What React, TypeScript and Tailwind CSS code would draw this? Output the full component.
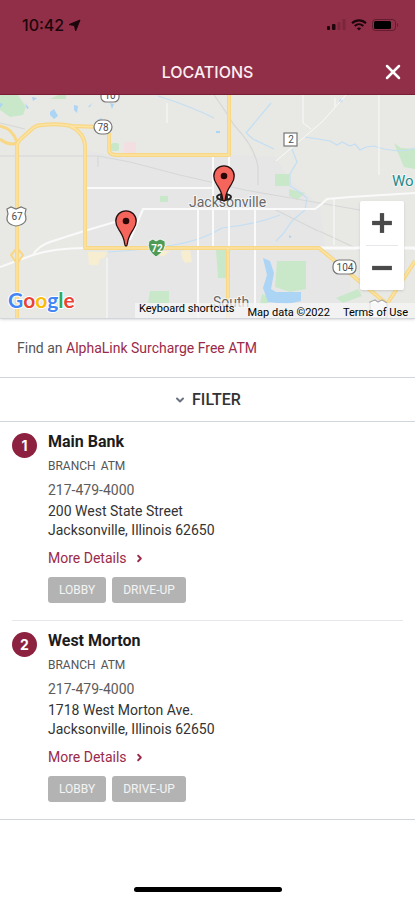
import React from 'react'
import { ChevronDown, ChevronRight, Minus, Plus, X } from 'lucide-react'

type Location = {
  id: number
  name: string
  types: string[]
  phone: string
  street: string
  city: string
  services: string[]
}

const locations: Location[] = [
  {
    id: 1,
    name: 'Main Bank',
    types: ['BRANCH', 'ATM'],
    phone: '217-479-4000',
    street: '200 West State Street',
    city: 'Jacksonville, Illinois 62650',
    services: ['LOBBY', 'DRIVE-UP'],
  },
  {
    id: 2,
    name: 'West Morton',
    types: ['BRANCH', 'ATM'],
    phone: '217-479-4000',
    street: '1718 West Morton Ave.',
    city: 'Jacksonville, Illinois 62650',
    services: ['LOBBY', 'DRIVE-UP'],
  },
]

const StatusBar: React.FC = () => (
  <div className="flex h-[50px] items-center justify-between pl-[22px] pr-4 text-[#1c060c]">
    <div className="flex items-center gap-1 font-['Inter'] text-base font-medium">
      <span>10:42</span>
      <svg width="13" height="13" viewBox="0 0 13 13" fill="currentColor" stroke="currentColor" strokeLinejoin="round">
        <path d="M12 1 L7.6 12 L6.5 6.6 L1 5.6 Z" />
      </svg>
    </div>
    <div className="flex items-center gap-[5px]">
      <svg width="19" height="12" viewBox="0 0 19 12" fill="currentColor">
        <rect x="0" y="7" width="3" height="4" rx="1" />
        <rect x="5" y="5" width="3.5" height="6" rx="1" />
        <rect x="10.500" y="3" width="3" height="8" rx="1" opacity="0.2" />
        <rect x="15.500" y="0" width="3" height="11" rx="1" opacity="0.2" />
      </svg>
      <svg width="16" height="12" viewBox="0 0 16 12" fill="none" stroke="currentColor">
        <path d="M1 4.200 C5 0.300 11 0.300 15 4.200" strokeWidth="2.200" />
        <path d="M3.700 7 C6.200 4.700 9.800 4.700 12.300 7" strokeWidth="2" />
        <path d="M8 11.500 L5.800 9.300 C7 8.300 9 8.300 10.200 9.300 Z" fill="currentColor" stroke="none" />
      </svg>
      <svg width="27" height="12" viewBox="0 0 27 12" fill="none">
        <rect x="0.500" y="0.500" width="23" height="11" rx="3" stroke="currentColor" opacity="0.4" />
        <rect x="2" y="2" width="17" height="8" rx="1.500" fill="#000" />
        <path d="M25 4 C26.500 4.500 26.500 7.500 25 8 Z" fill="currentColor" opacity="0.4" />
      </svg>
    </div>
  </div>
)

const Header: React.FC = () => (
  <header className="border-b border-[#7c1f38] bg-[#922f48]">
    <StatusBar />
    <div className="grid h-11 grid-cols-[44px_1fr_44px] items-center">
      <h1 className="col-start-2 text-center font-['Inter'] text-base font-medium text-[#fbeef1]">LOCATIONS</h1>
      <button className="flex h-11 items-center justify-center text-white" aria-label="Close">
        <X size={24} strokeWidth={2.5} />
      </button>
    </div>
  </header>
)

const Pin: React.FC<{ x: number; y: number }> = ({ x, y }) => (
  <g transform={`translate(${x} ${y})`}>
    <path
      d="M0 0 C-0.800 0 -1.200 -0.800 -1.400 -2.500 C-2 -9 -4.500 -12 -7.500 -17 C-9.500 -20 -10.200 -22.500 -10.200 -25 A10.200 10.200 0 0 1 10.200 -25 C10.200 -22.500 9.500 -20 7.500 -17 C4.500 -12 2 -9 1.400 -2.500 C1.200 -0.800 0.800 0 0 0 Z"
      fill="#f6655b"
      stroke="#26100f"
      strokeWidth="1.300"
    />
    <circle cx="0" cy="-25" r="3.300" fill="#2a0808" />
  </g>
)

const MapCanvas: React.FC = () => (
  <svg
    className="block h-[223px] w-full"
    viewBox="0 0 415 223"
    preserveAspectRatio="xMidYMid slice"
    fontFamily="Roboto, sans-serif"
    role="img"
    aria-label="Map of Jacksonville"
  >
    <rect width="415" height="223" fill="#e8e8e4" />
    {/* TOWN AREA */}
    <path d="M85 55 L109 60 L229 60 L275 62 L290 85 L320 110 L325 150 L350 180 L350 223 L108 223 L108 154 L85 153 Z" fill="#e6e6e7" />
    {/* PARKS */}
    <g fill="#c9e8ca">
      <path d="M0 0 H18 L26 12 L23 20 L10 22 L0 15 Z" />
      <path d="M50 4 L58 0 H66 V4 Z" />
      <rect x="111" y="48" width="8" height="8" rx="2" />
      <rect x="160" y="101" width="8" height="6" />
      <path d="M275 79 H289 V91 H275 Z M289 94 L305 98 L297 105 L289 101 Z" />
      <path d="M394 48 L401 53 L415 54 V74 L404 72 Z" />
      <path d="M216 155 H226 V183 H218 Z" />
      <path d="M150 196 H169 V208 H148 Z" />
      <path d="M277 166 H306 V194 L290 197 L275 192 Z" />
      <path d="M336 203 L358 194 L362 201 L343 208 Z" />
      <path d="M262 199 L270 203 L268 209 H260 Z" />
    </g>
    <rect x="124" y="47" width="12" height="12" rx="3" fill="#f3dfe2" />
    <g fill="#f7edd0">
      <path d="M88 157 H108 L104 163 L100 164 L98 170 H89 Z" />
      <path d="M160 156 H170 L164 161 H160 Z M181 156 L190 155 L192 167 L185 168 L182 163 Z" />
    </g>
    {/* WATER */}
    <g fill="none" stroke="#c3dff3" strokeWidth="1.200">
      <path d="M158 1 Q190 11 214 23" />
      <path d="M271 8 L246 38 L253 44 L274 54" />
      <path d="M305 42 L318 44 L330 46 L337 50 L342 47 L350 51 L355 49 L360 55 L366 52 L374 51 L384 54 L398 56 L408 55 L415 53" />
      <path d="M292 54 L297 67 L290 79 L290 91 L298 96 L307 103 L305 115 L292 126 L283 139 L276 146" />
      <path d="M108 157 Q145 155 174 150 T222 133 Q254 130 280 120" />
    </g>
    <g fill="#acd4f4">
      <path d="M50 17 L54 14 L58 21 L54 24 L50 20 Z M74 10 L78 11 L77 18 L74 15 Z M25 8 L29 13 L27 14 Z M32 2 L37 3 L33 6 Z M88 12 L92 8 L90 12 Z M110 8 L114 9 L112 14 Z M0 8 L3 9 L0 13 Z" />
      <path d="M97 25 L102 23 L101 27 Z M216 36 H220 V38 H216 Z M340 4 L343 6 L339 8 Z M289 140 L292 142 L289 143 Z" />
      <path d="M263 163 L270 166 L274 178 L271 194 L276 197 H301 V206 L287 209 L268 207 L263 193 L267 180 Z" />
    </g>
    {/* RAILWAYS */}
    <g fill="none" stroke="#d6d8d8" strokeWidth="1.200">
      <path d="M0 61 L98 61 L130 67 L180 80 L245 95 L285 102 L360 115" />
      <path d="M214 0 Q225 15 234 30 Q255 52 258 72 L258 90" />
      <path d="M0 28 L25 34 M274 114 L318 136 M319 136 L360 155" />
      <path d="M98 61 V72" />
    </g>
    {/* STREETS */}
    <g fill="none" stroke="#fafafa" strokeWidth="2">
      <path d="M213 62 V152 M229 62 V152 M198 113 V223 M255 113 V223" />
      <path d="M87 93 H213" />
      <path d="M130 145 L143 114 L315 114 Q321 110 327 104 L350 102 L415 98" />
      <path d="M0 172 L33 160 Q55 153 85 153" />
      <path d="M33 160 Q38 151 50 147 Q80 137 115 127" />
      <path d="M320 153 H415 V155" strokeWidth="3" />
      <path d="M107 163 V223 M167 8 V28 M303 0 V28 L311 34 M346 0 L322 27 L276 66 M335 3 V12 M379 0 V80 M334 104 V150" strokeWidth="1" />
    </g>
    {/* HIGHWAYS */}
    <g fill="none" stroke="#f8d785" strokeWidth="4" strokeLinejoin="round">
      <path d="M17 223 V50 Q18 46 23 42 L33 33 Q37 30 42 30 Q58 28 72 31 L100 32" />
      <path d="M70 31 Q85 38 85 52 V153 H319 L387 209 L415 166" />
      <path d="M109 38 V54 Q109 60 116 60 H229 V0" />
      <path d="M228 153 V223" />
      <path d="M0 31 Q13 34 17 47 M0 44 Q9 51 17 48" strokeWidth="3" />
      <path d="M17 153 L11 160 L17 169 L23 160 Z" strokeWidth="2" />
    </g>
    <g fill="none" stroke="#fbe4a4" strokeWidth="1.500">
      <path d="M17 223 V50 Q18 46 23 42 L33 33 Q37 30 42 30 Q58 28 72 31 L100 32 M70 31 Q85 38 85 52 V153 H319 L387 209 L415 166 M228 153 V223" />
      <path d="M109 38 V54 Q109 60 116 60 H229 V0" />
    </g>
    {/* ROAD SHIELDS */}
    <g fill="#fff" stroke="#777" strokeWidth="1.200">
      <rect x="94" y="25" width="18" height="14" rx="7" />
      <rect x="101" y="-8" width="18" height="15" rx="5" />
      <rect x="284" y="38" width="13" height="13" />
      <rect x="333" y="165" width="23" height="14" rx="6" />
      <path d="M7 114 L11 112 L16 114 L21 112 L26 114 L25 119 Q29 129 16 131 Q4 129 8 119 Z" />
      <path d="M370 207 L375 205 L378 207 L382 205 L387 208 V223 H370 Z" stroke="#aaa" />
    </g>
    <g fill="#4c4c4c" fontSize="10" textAnchor="middle">
      <text x="103" y="36">78</text>
      <text x="110" y="4">10</text>
      <text x="291" y="48">2</text>
      <text x="345" y="176">104</text>
      <text x="17" y="125">67</text>
    </g>
    <path d="M149 146 L153 144 L156 146 L160 144 L165 146 Q167 155 156 162 Q146 155 149 146 Z" fill="#4f9b55" stroke="#fff" strokeWidth="0.800" />
    <text x="157" y="157" fontSize="10" fontWeight="700" fill="#fff" textAnchor="middle">72</text>
    {/* PLACES */}
    <g stroke="#f5f5f5" strokeWidth="2" paintOrder="stroke" fill="#686868">
      <text x="189" y="112" fontSize="14">Jacksonville</text>
      <text x="213" y="212" fontSize="14">South</text>
      <text x="392" y="91" fontSize="15" fill="#248b8b">Wo</text>
    </g>
    <g fill="none" stroke="#222" strokeWidth="2">
      <ellipse cx="224" cy="102" rx="7" ry="3" />
      <circle cx="224" cy="102" r="3" />
    </g>
    <Pin x={126} y={151} />
    <Pin x={224} y={106} />
  </svg>
)

const LocationMap: React.FC = () => (
  <section className="relative overflow-hidden border-b border-gray-300 shadow-sm">
    <MapCanvas />
    {/* ZOOM */}
    <div className="absolute right-[11px] top-[106px] flex w-11 flex-col items-center rounded-xs bg-white text-[#4a4a4a] shadow">
      <button className="flex h-11 w-full items-center justify-center" aria-label="Zoom in">
        <Plus size={34} strokeWidth={3} strokeLinecap="butt" />
      </button>
      <span className="h-px w-8 bg-gray-200" />
      <button className="flex h-11 w-full items-center justify-center" aria-label="Zoom out">
        <Minus size={34} strokeWidth={3} strokeLinecap="butt" />
      </button>
    </div>
    {/* MAP CREDITS */}
    <a
      href="#"
      className="absolute bottom-1 left-2 font-['Lato'] text-[21px] font-bold leading-7 [paint-order:stroke] [-webkit-text-stroke:2px_white]"
    >
      <span className="text-[#4285f4]">G</span>
      <span className="text-[#ea4335]">o</span>
      <span className="text-[#fbbc05]">o</span>
      <span className="text-[#4285f4]">g</span>
      <span className="text-[#34a853]">l</span>
      <span className="text-[#ea4335]">e</span>
    </a>
    <div className="absolute bottom-0 right-0 flex h-[15px] items-start gap-[13px] overflow-hidden bg-[#f5f5f5]/75 pl-1 pr-[7px] text-[11px] leading-3 text-black">
      <button>Keyboard shortcuts</button>
      <span className="pt-1">Map data ©2022</span>
      <a href="#" className="pt-1">Terms of Use</a>
    </div>
  </section>
)

const LocationItem: React.FC<{ location: Location }> = ({ location }) => (
  <li className="mx-3 flex border-b border-gray-200 pb-[17px] pt-2 last:border-b-0">
    <span className="mr-[11px] mt-[3px] flex size-[25px] shrink-0 items-center justify-center rounded-full bg-[#8d2140] font-['Inter'] text-sm font-bold text-white">
      {location.id}
    </span>
    <div className="text-sm">
      <h2 className="text-base font-bold leading-6 text-[#1c1c1c]">{location.name}</h2>
      <p className="flex gap-[5px] text-xs leading-6 text-[#555]">
        {location.types.map((type) => (
          <span key={type}>{type}</span>
        ))}
      </p>
      <a href="#" className="block leading-6 text-[#5c5c5c]">
        {location.phone}
      </a>
      <address className="not-italic leading-[19px] text-[#333]">
        {location.street}
        <br />
        {location.city}
      </address>
      <a href="#" className="flex h-9 items-center gap-[7px] text-[#9a2a4a]">
        More Details
        <ChevronRight size={11} strokeWidth={4} />
      </a>
      <div className="flex gap-[6px] pt-px">
        {location.services.map((service) => (
          <button key={service} className="h-[26px] rounded-[3px] bg-[#b3b3b3] px-[11px] text-xs text-[#f4f4f4]">
            {service}
          </button>
        ))}
      </div>
    </div>
  </li>
)

const App: React.FC = () => (
  <div className="flex min-h-screen flex-col bg-white font-['Roboto',sans-serif]">
    <Header />
    <main>
      <LocationMap />
      <p className="border-b border-gray-300 px-[17px] text-sm leading-[58px] text-[#555]">
        Find an{' '}
        <a href="#" className="text-[#9a2a4a]">
          AlphaLink Surcharge Free ATM
        </a>
      </p>
      <button className="flex h-11 w-full items-center justify-center gap-[6px] border-b border-gray-300 text-base font-medium text-[#333]">
        <ChevronDown size={12} strokeWidth={4} className="text-gray-500" />
        FILTER
      </button>
      <ul className="border-b border-gray-300">
        {locations.map((location) => (
          <LocationItem key={location.id} location={location} />
        ))}
      </ul>
    </main>
    <footer className="mt-auto flex justify-center pb-2 pt-4">
      <span className="h-[5px] w-[148px] rounded-full bg-black" />
    </footer>
  </div>
)

export default App
